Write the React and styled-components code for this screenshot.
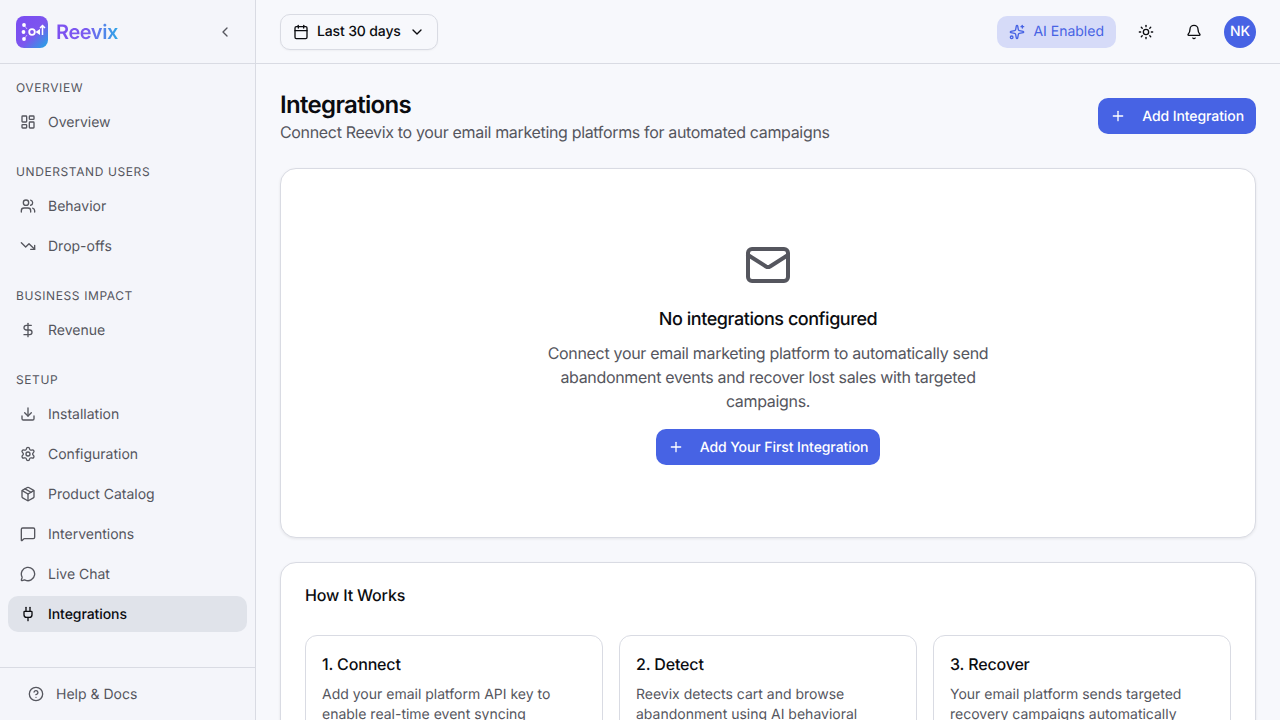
import React from "react";
import styled, { createGlobalStyle } from "styled-components";
import {
  Bell,
  Calendar,
  ChevronDown,
  ChevronLeft,
  CircleHelp,
  DollarSign,
  Download,
  LayoutDashboard,
  Mail,
  MessageCircle,
  MessageSquare,
  Package,
  Plug,
  Plus,
  Settings,
  Sparkles,
  Sun,
  TrendingDown,
  Users,
} from "lucide-react";

const GlobalStyle = createGlobalStyle`
  html, body {
    margin: 0;
    height: 100%;
    overflow: hidden;
  }
  body {
    font-family: Inter, "Liberation Sans", sans-serif;
    text-rendering: geometricPrecision;
    background: #f7f8fc;
    color: #0b0c10;
  }
  * {
    box-sizing: border-box;
  }
`;

const Shell = styled.div`
  display: flex;
  height: 100vh;
  overflow: hidden;
`;

const Sidebar = styled.aside`
  flex: 0 0 256px;
  display: flex;
  flex-direction: column;
  background: #f4f5fa;
  border-right: 1px solid #d9dbe3;
`;

const Brand = styled.div`
  flex: 0 0 64px;
  display: flex;
  align-items: center;
  justify-content: space-between;
  padding: 0 22px 0 16px;
  border-bottom: 1px solid #d9dbe3;
  color: #55565e;
`;

const BrandLeft = styled.div`
  display: flex;
  align-items: center;
  gap: 8px;
`;

const BrandName = styled.span`
  font-size: 20px;
  line-height: 28px;
  font-weight: 600;
  letter-spacing: -0.02em;
  background: linear-gradient(90deg, #7c4ff0 0%, #7c5cf0 50%, #2ea6e6 100%);
  -webkit-background-clip: text;
  background-clip: text;
  color: transparent;
`;

const Nav = styled.nav`
  flex: 1;
  display: flex;
  flex-direction: column;
  gap: 24px;
  padding: 16px 8px 0;
`;

const Group = styled.div`
  display: flex;
  flex-direction: column;
  gap: 4px;
`;

const GroupTitle = styled.div`
  padding: 0 8px;
  margin-bottom: 4px;
  font-size: 12px;
  line-height: 16px;
  font-weight: 400;
  letter-spacing: 0.05em;
  color: #55565e;
`;

const NavItem = styled.a`
  display: flex;
  align-items: center;
  gap: 12px;
  height: 36px;
  padding: 0 12px;
  border-radius: 10px;
  font-size: 14px;
  font-weight: ${(p) => (p.$active ? 500 : 400)};
  letter-spacing: ${(p) => (p.$active ? "-0.005em" : "normal")};
  color: ${(p) => (p.$active ? "#0b0c10" : "#55565e")};
  background: ${(p) => (p.$active ? "#e0e3ea" : "transparent")};
`;

const SideFooter = styled.div`
  flex: 0 0 53px;
  padding: 8px 16px;
  border-top: 1px solid #d9dbe3;
`;

const Main = styled.div`
  flex: 1;
  min-width: 0;
  display: flex;
  flex-direction: column;
`;

const Topbar = styled.header`
  flex: 0 0 64px;
  display: flex;
  align-items: center;
  justify-content: space-between;
  padding: 0 24px;
  border-bottom: 1px solid #d9dbe3;
`;

const DateButton = styled.button`
  display: flex;
  align-items: center;
  gap: 8px;
  height: 36px;
  padding: 0 12px;
  font: 500 14px Inter, sans-serif;
  letter-spacing: -0.01em;
  text-rendering: geometricPrecision;
  color: #0b0c10;
  background: #f7f8fc;
  border: 1px solid #d9dbe3;
  border-radius: 10px;
  box-shadow: 0 1px 2px rgba(0, 0, 0, 0.04);
`;

const TopRight = styled.div`
  display: flex;
  align-items: center;
  gap: 8px;
`;

const AiBadge = styled.div`
  display: flex;
  align-items: center;
  gap: 8px;
  height: 32px;
  padding: 0 12px;
  margin-right: 2px;
  border-radius: 10px;
  background: #d6dbf8;
  color: #4763e4;
  font-size: 14px;
`;

const IconButton = styled.button`
  display: flex;
  align-items: center;
  justify-content: center;
  width: 40px;
  height: 40px;
  padding: 0;
  border: 0;
  background: transparent;
  color: #0b0c10;
`;

const Avatar = styled.div`
  display: flex;
  align-items: center;
  justify-content: center;
  width: 32px;
  height: 32px;
  margin-left: 2px;
  border-radius: 50%;
  background: #4763e4;
  color: #fff;
  font-size: 14px;
  font-weight: 500;
  letter-spacing: -0.01em;
`;

const Content = styled.main`
  flex: 1;
  display: flex;
  flex-direction: column;
  gap: 24px;
  padding: 24px;
`;

const PageHead = styled.div`
  display: flex;
  align-items: center;
  justify-content: space-between;
  height: 56px;
`;

const PageTitle = styled.h1`
  margin: 0;
  padding-top: 2px;
  font-size: 24px;
  line-height: 30px;
  font-weight: 600;
  letter-spacing: -0.028em;
`;

const PageSub = styled.p`
  margin: 0;
  font-size: 16px;
  line-height: 24px;
  letter-spacing: -0.021em;
  color: #55565e;
`;

const PrimaryButton = styled.button`
  display: flex;
  align-items: center;
  gap: 16px;
  height: 36px;
  padding: 0 12px;
  font: 500 14px Inter, sans-serif;
  letter-spacing: -0.006em;
  text-rendering: geometricPrecision;
  color: #fff;
  background: #4763e4;
  border: 0;
  border-radius: 10px;
`;

const Card = styled.section`
  flex: none;
  background: #fff;
  border: 1px solid #d9dbe3;
  border-radius: 16px;
  box-shadow: 0 1px 3px rgba(0, 0, 0, 0.08);
`;

const EmptyCard = styled(Card)`
  display: flex;
  flex-direction: column;
  align-items: center;
  height: 370px;
  padding-top: 72px;
  color: #55565e;
`;

const EmptyTitle = styled.h3`
  margin: 17px 0 7px;
  font-size: 18px;
  line-height: 28px;
  font-weight: 500;
  letter-spacing: -0.025em;
  color: #0b0c10;
`;

const EmptyText = styled.p`
  width: 448px;
  margin: 0 0 16px;
  font-size: 16px;
  line-height: 24px;
  letter-spacing: -0.02em;
  text-align: center;
  color: #55565e;
`;

const StepsCard = styled(Card)`
  padding: 22px 24px 24px;
`;

const StepsTitle = styled.h3`
  margin: 0 0 30px;
  font-size: 16px;
  line-height: 20px;
  font-weight: 500;
  letter-spacing: -0.01em;
`;

const Steps = styled.div`
  display: grid;
  grid-template-columns: repeat(3, 1fr);
  gap: 16px;
`;

const Step = styled.div`
  padding: 16px;
  border: 1px solid #d9dbe3;
  border-radius: 12px;
`;

const StepTitle = styled.h4`
  margin: 0 0 9px;
  font-size: 16px;
  line-height: 24px;
  font-weight: 500;
  letter-spacing: -0.01em;
`;

const StepText = styled.p`
  margin: 0;
  font-size: 14px;
  line-height: 20px;
  color: #55565e;
`;

const Logo = () => (
  <svg width="32" height="32" viewBox="0 0 32 32">
    <defs>
      <linearGradient id="logoGrad" x1="0" y1="0" x2="1" y2="1">
        <stop offset="0" stopColor="#7a4df2" />
        <stop offset="0.55" stopColor="#7d55ee" />
        <stop offset="1" stopColor="#1fa9e4" />
      </linearGradient>
    </defs>
    <rect width="32" height="32" rx="8" fill="url(#logoGrad)" />
    <g fill="#fff">
      <circle cx="8" cy="9" r="1.9" />
      <circle cx="7.5" cy="16" r="1.9" />
      <circle cx="8" cy="23" r="1.9" />
    </g>
    <path d="M8 9l3 4M8 23l3-4" stroke="#fff" strokeWidth="0.8" opacity="0.7" />
    <circle cx="16" cy="16" r="2.8" fill="none" stroke="#fff" strokeWidth="1.8" />
    <path d="M19.5 16l4.5-3v6z" fill="#fff" />
    <path d="M26.5 19v-9M24 12l2.5-2.5L29 12" fill="none" stroke="#fff" strokeWidth="1.5" />
  </svg>
);

const groups = [
  { title: "OVERVIEW", items: [{ icon: LayoutDashboard, label: "Overview" }] },
  {
    title: "UNDERSTAND USERS",
    items: [
      { icon: Users, label: "Behavior" },
      { icon: TrendingDown, label: "Drop-offs" },
    ],
  },
  { title: "BUSINESS IMPACT", items: [{ icon: DollarSign, label: "Revenue" }] },
  {
    title: "SETUP",
    items: [
      { icon: Download, label: "Installation" },
      { icon: Settings, label: "Configuration" },
      { icon: Package, label: "Product Catalog" },
      { icon: MessageSquare, label: "Interventions" },
      { icon: MessageCircle, label: "Live Chat" },
      { icon: Plug, label: "Integrations", active: true },
    ],
  },
];

const steps = [
  {
    title: "1. Connect",
    text: "Add your email platform API key to enable real-time event syncing",
  },
  {
    title: "2. Detect",
    text: "Reevix detects cart and browse abandonment using AI behavioral analysis",
  },
  {
    title: "3. Recover",
    text: "Your email platform sends targeted recovery campaigns automatically",
  },
];

const App = () => {
  return (
    <Shell>
      <GlobalStyle />
      <Sidebar>
        <Brand>
          <BrandLeft>
            <Logo />
            <BrandName>Reevix</BrandName>
          </BrandLeft>
          <ChevronLeft size={16} />
        </Brand>
        <Nav>
          {groups.map((group) => (
            <Group key={group.title}>
              <GroupTitle>{group.title}</GroupTitle>
              {group.items.map((item) => (
                <NavItem key={item.label} $active={item.active}>
                  <item.icon size={16} />
                  {item.label}
                </NavItem>
              ))}
            </Group>
          ))}
        </Nav>
        <SideFooter>
          <NavItem>
            <CircleHelp size={16} />
            Help & Docs
          </NavItem>
        </SideFooter>
      </Sidebar>
      <Main>
        <Topbar>
          <DateButton>
            <Calendar size={16} />
            Last 30 days
            <ChevronDown size={16} />
          </DateButton>
          <TopRight>
            <AiBadge>
              <Sparkles size={16} />
              AI Enabled
            </AiBadge>
            <IconButton>
              <Sun size={16} />
            </IconButton>
            <IconButton>
              <Bell size={16} />
            </IconButton>
            <Avatar>NK</Avatar>
          </TopRight>
        </Topbar>
        <Content>
          <PageHead>
            <div>
              <PageTitle>Integrations</PageTitle>
              <PageSub>Connect Reevix to your email marketing platforms for automated campaigns</PageSub>
            </div>
            <PrimaryButton>
              <Plus size={16} />
              Add Integration
            </PrimaryButton>
          </PageHead>
          <EmptyCard>
            <Mail size={48} />
            <EmptyTitle>No integrations configured</EmptyTitle>
            <EmptyText>
              Connect your email marketing platform to automatically send abandonment events and
              recover lost sales with targeted campaigns.
            </EmptyText>
            <PrimaryButton>
              <Plus size={16} />
              Add Your First Integration
            </PrimaryButton>
          </EmptyCard>
          <StepsCard>
            <StepsTitle>How It Works</StepsTitle>
            <Steps>
              {steps.map((step) => (
                <Step key={step.title}>
                  <StepTitle>{step.title}</StepTitle>
                  <StepText>{step.text}</StepText>
                </Step>
              ))}
            </Steps>
          </StepsCard>
        </Content>
      </Main>
    </Shell>
  );
};

export default App;
